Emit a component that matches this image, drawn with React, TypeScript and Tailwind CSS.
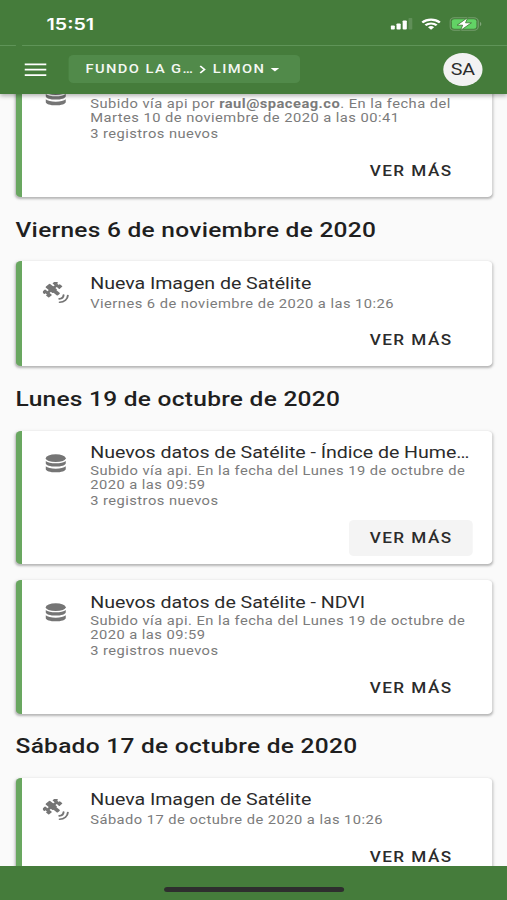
import { ReactNode } from 'react';

type Entry = {
    id: number;
    icon: 'satellite' | 'database';
    title: string;
    detail: ReactNode;
    records?: string;
    active?: boolean;
}

const lunes: Entry[] = [
    { id: 1, icon: 'database', title: 'Nuevos datos de Satélite - Índice de Humedad', detail: 'Subido vía api. En la fecha del Lunes 19 de octubre de 2020 a las 09:59', records: '3 registros nuevos', active: true },
    { id: 2, icon: 'database', title: 'Nuevos datos de Satélite - NDVI', detail: 'Subido vía api. En la fecha del Lunes 19 de octubre de 2020 a las 09:59', records: '3 registros nuevos' },
];

function DatabaseIcon() {
    return (
        <svg viewBox="0 0 17 19" className="w-[17px] h-[19px] fill-[#757575]">
            <ellipse cx="8.5" cy="4.2" rx="8.2" ry="3.9" />
            <path d="M.3 6.9c1.500 1.700 4.500 2.400 8.200 2.400s6.700-.7 8.200-2.400v2.300c0 1.900-3.700 3.400-8.200 3.400S.3 11.100.3 9.200z" />
            <path d="M.3 12.300c1.500 1.700 4.500 2.400 8.200 2.400s6.700-.7 8.200-2.400v2.600c0 1.900-3.700 3.400-8.200 3.400S.3 16.800.3 14.900z" />
        </svg>
    );
}

function SatelliteIcon() {
    return (
        <svg viewBox="0 0 22 22" className="w-[22px] h-[22px] fill-[#757575]">
            <g transform="translate(8.2 7.8) rotate(45)">
                <rect x="-6.400" y="-2.600" width="9" height="5.200" rx="1" />
                <rect x="2" y="-1.700" width="4.800" height="3.400" rx=".8" />
                <rect x="-2.200" y="-6" width="2.400" height="12" />
                <rect x="-4.800" y="-8" width="3" height="3.800" rx=".6" />
                <rect x="-1.800" y="-6.800" width="2" height="2.400" />
                <rect x="-.2" y="-8" width="3.400" height="3.800" rx=".6" />
                <rect x="-4.800" y="4.200" width="3" height="3.800" rx=".6" />
                <rect x="-1.800" y="4.400" width="2" height="2.400" />
                <rect x="-.2" y="4.200" width="3.400" height="3.800" rx=".6" />
            </g>
            <g fill="none" stroke="#757575" strokeWidth="1.600" strokeLinecap="round">
                <path d="M16.900 13.100a4 4 0 0 1-3.500 3.800" />
                <path d="M20.400 13.500a7 7 0 0 1-6.700 6.800" />
            </g>
        </svg>
    );
}

function EntryCard({ entry }: { entry: Entry }) {
    return (
        <div className={`flex flex-col justify-between rounded border-l-[5px] border-[#69a760] bg-white pt-[11.6px] pb-2 shadow-[0_1.5px_2px_rgba(0,0,0,0.22),0_1px_4px_rgba(0,0,0,0.1)] ${entry.records ? 'h-[133.5px]' : 'h-[105px]'}`}>
            <div className="flex">
                <div className="flex w-[56px] shrink-0 justify-center pt-[9.5px]">
                    {entry.icon === 'database' ? <div className="pt-[2px]"><DatabaseIcon /></div> : <SatelliteIcon />}
                </div>
                <div className="min-w-0 flex-1 pr-[17px]">
                    <h3 className="truncate text-[16px] leading-[22px] tracking-[-0.03px] text-[#2b2b2b]">{entry.title}</h3>
                    <p className={`text-[12px] tracking-[0.38px] text-[#7b7b7b] ${entry.records ? 'leading-[14px]' : 'leading-[18px]'}`}>{entry.detail}</p>
                    {entry.records && <p className="text-[12px] leading-[18px] tracking-[0.37px] text-[#7b7b7b]">{entry.records}</p>}
                </div>
            </div>
            <div className="flex justify-end pr-4">
                <button className={`h-9 w-[101px] rounded pt-[1.2px] pl-[0.5px] text-[14px] font-medium tracking-[1.2px] text-[#2b2b2b] ${entry.active ? 'bg-[#f4f4f4]' : ''}`}>VER MÁS</button>
            </div>
        </div>
    );
}

function DateHeading({ children }: { children: ReactNode }) {
    return <h2 className="flex h-[64.3px] items-center pt-px text-[20px] font-medium tracking-[0.22px] text-[#1f1f1f]">{children}</h2>;
}

function StatusBar() {
    return (
        <div className="flex h-[45px] items-center justify-between pt-[3px] pr-[20px] pl-[38px]">
            <span className="font-['Inter',sans-serif] text-[16px] font-semibold">15:51</span>
            <div className="flex items-center gap-[7px]">
                <svg viewBox="0 0 18 12" className="h-3 w-[18px] fill-white">
                    <rect x="0" y="7.500" width="3.400" height="4" rx=".8" />
                    <rect x="4.800" y="5.500" width="3.400" height="6" rx=".8" />
                    <rect x="9.800" y="2.500" width="3.400" height="9" rx=".8" />
                    <rect x="14.600" y="0" width="3.200" height="11.500" rx=".8" opacity=".15" />
                </svg>
                <svg viewBox="0 0 16 12" className="h-3 w-4">
                    <g fill="none" stroke="#fff" strokeWidth="2.100">
                        <path d="M.8 4.500a10.500 10.500 0 0 1 14.400 0" />
                        <path d="M3.400 7.300a6.700 6.700 0 0 1 9.200 0" />
                    </g>
                    <path d="M8 11.700 5.500 9.200a3.600 3.600 0 0 1 5 0z" fill="#fff" />
                </svg>
                <svg viewBox="0 0 27 14" className="h-[14px] w-[27px]">
                    <rect x=".5" y=".8" width="23" height="12.400" rx="3.500" fill="none" stroke="#fff" strokeOpacity=".25" />
                    <path d="M25 5v4c1.300-.3 1.300-3.700 0-4z" fill="#fff" opacity=".35" />
                    <rect x="2" y="2.300" width="20" height="9.400" rx="2" fill="#62d365" />
                    <path d="M15 .5 6.200 8.200h4.600L9 13.500 18 5.800h-4.800z" fill="#fff" stroke="#457c3b" strokeWidth=".8" />
                </svg>
            </div>
        </div>
    );
}

export default function App() {
    return (
        <div className="h-[900px] w-[507px] overflow-hidden bg-[#fafafa]">
            <div className="flex h-[900px] w-[414px] origin-top-left scale-x-[1.2246] flex-col font-['Roboto',sans-serif]">
                <header className="z-10 h-[94px] shrink-0 bg-[#457c3b] text-white shadow-[0_2px_4px_rgba(0,0,0,0.3)]">
                    <StatusBar />
                    <div className="flex h-px gap-[5px]">
                        <div className="w-[13px] bg-[#5f9458]" />
                        <div className="flex-1 bg-[#5f9458]" />
                    </div>
                    <div className="flex h-[47px] items-center pr-5 pl-[19.500px]">
                        <svg viewBox="0 0 18 14" className="h-[14px] w-[18px] fill-white">
                            <path d="M0 .4h18v1.800H0zM0 5.800h18v1.800H0zM0 11.200h18v1.800H0z" />
                        </svg>
                        <div className="-mt-px ml-[18.800px] flex h-7 w-[189px] items-center rounded bg-[#518a4a] pl-[13.500px] text-[12px] font-medium tracking-[1.15px] text-[#f4f8f3]">
                            <span className="w-[91px] truncate">FUNDO LA GRANJA</span>
                            <svg viewBox="0 0 7 9" className="mr-[4.500px] ml-[1.500px] h-[9px] w-[7px]">
                                <path d="m1.500 1 3.500 3.500L1.500 8" fill="none" stroke="#fff" strokeWidth="1.500" />
                            </svg>
                            <span>LIMON</span>
                            <svg viewBox="0 0 8 4" className="mt-[2px] ml-[4px] h-[3.500px] w-[7px] fill-white">
                                <path d="M0 0h8L4 4z" />
                            </svg>
                        </div>
                        <div className="ml-auto flex h-[33px] w-8 items-center justify-center rounded-full bg-[#f2f2f2] text-[16px] text-[#2b2b2b]">SA</div>
                    </div>
                </header>

                <main className="flex min-h-0 flex-1 flex-col overflow-hidden pr-3 pl-[12.700px]">
                    <div className="-mt-[30.600px] shrink-0">
                        <EntryCard
                            entry={{
                                id: 0,
                                icon: 'database',
                                title: 'Nuevos datos de Satélite - NDVI',
                                detail: <>Subido vía api por <b>raul@spaceag.co</b>. En la fecha del Martes 10 de noviembre de 2020 a las 00:41</>,
                                records: '3 registros nuevos',
                            }}
                        />
                        <DateHeading>Viernes 6 de noviembre de 2020</DateHeading>
                        <EntryCard entry={{ id: 3, icon: 'satellite', title: 'Nueva Imagen de Satélite', detail: 'Viernes 6 de noviembre de 2020 a las 10:26' }} />
                        <DateHeading>Lunes 19 de octubre de 2020</DateHeading>
                        <div className="flex flex-col gap-4">
                            {lunes.map((entry) => <EntryCard key={entry.id} entry={entry} />)}
                        </div>
                        <DateHeading>Sábado 17 de octubre de 2020</DateHeading>
                        <EntryCard entry={{ id: 4, icon: 'satellite', title: 'Nueva Imagen de Satélite', detail: 'Sábado 17 de octubre de 2020 a las 10:26' }} />
                    </div>
                </main>

                <footer className="flex h-[34px] shrink-0 justify-center bg-[#457c3b] pt-[21px]">
                    <div className="h-[5px] w-[147px] rounded-full bg-[#2e2e2e]" />
                </footer>
            </div>
        </div>
    );
}
